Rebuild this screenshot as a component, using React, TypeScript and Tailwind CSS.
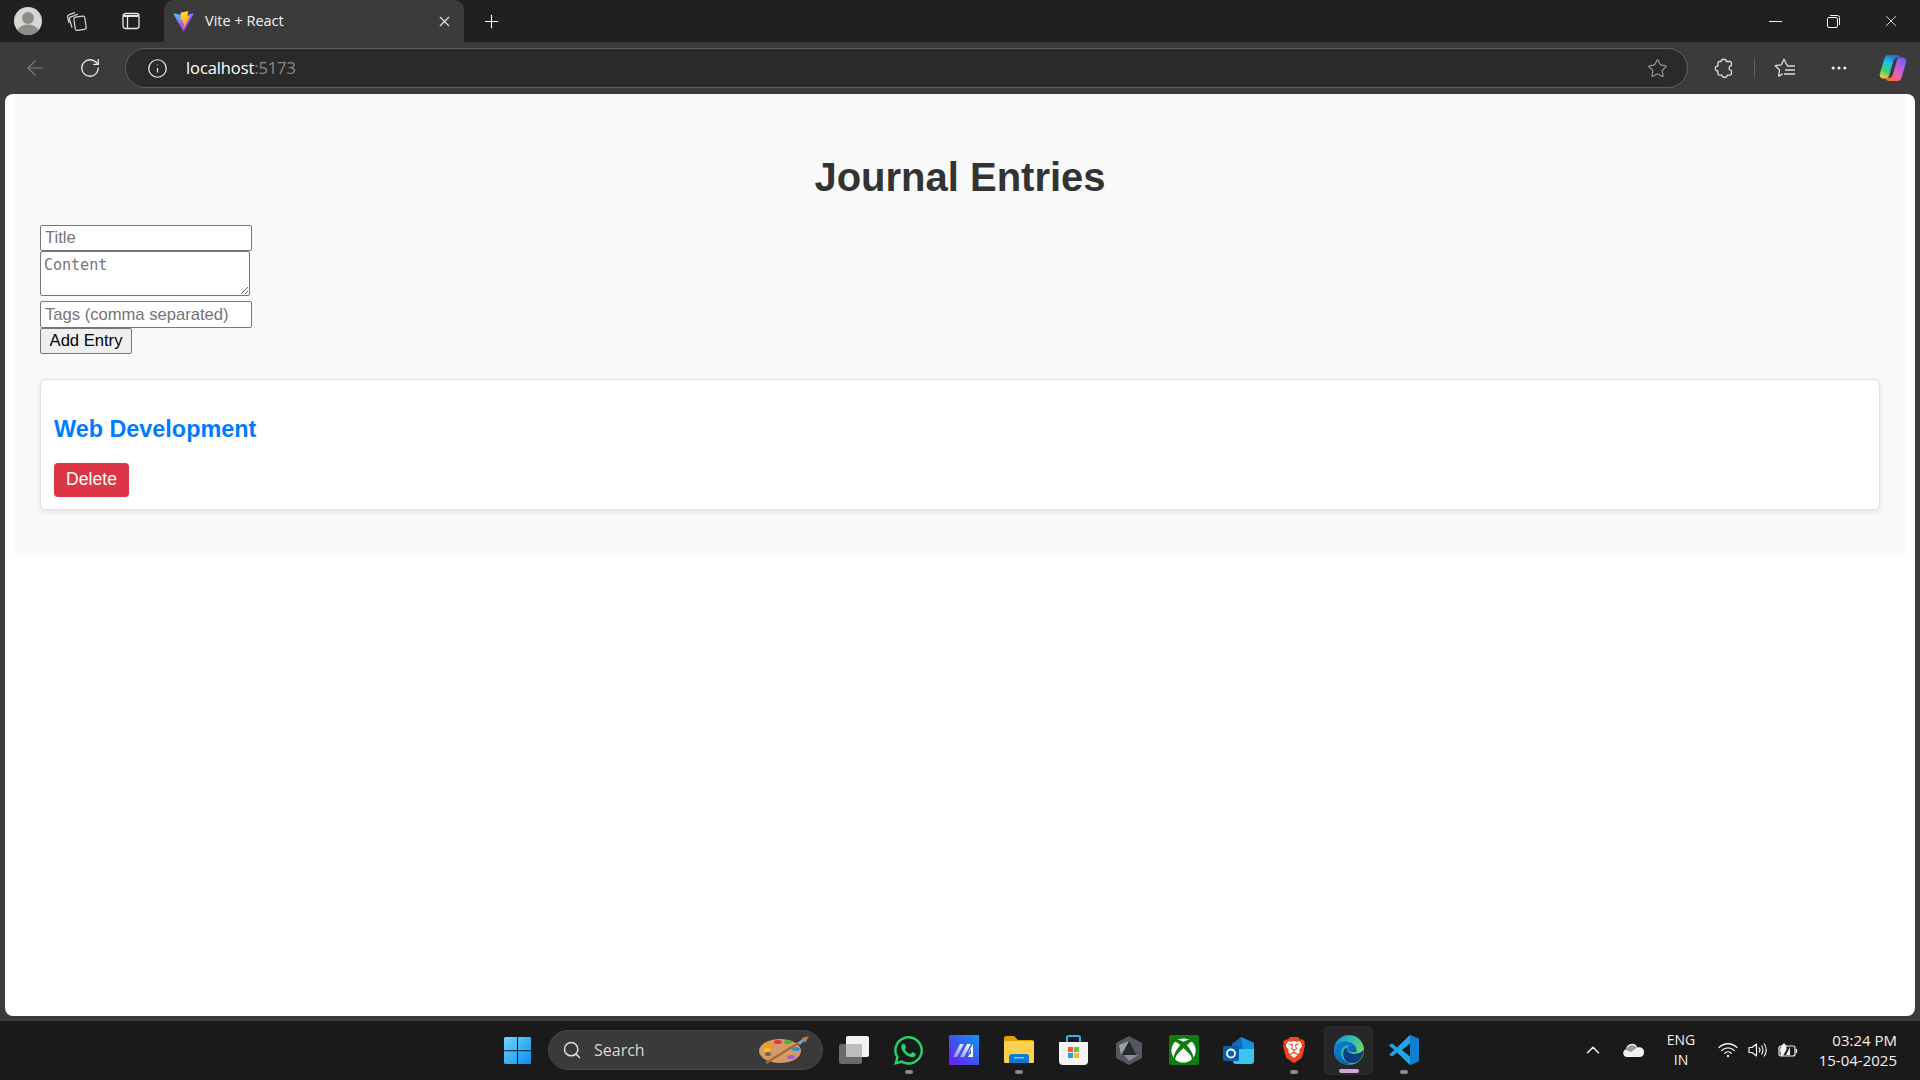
import { ArrowLeft, ChevronUp, Info, MoreHorizontal, Plus, RotateCw, Search, Star, X } from 'lucide-react';
import { FaWhatsapp, FaXbox } from 'react-icons/fa';
import { SiBrave } from 'react-icons/si';

const chromeFont = { fontFamily: '"Open Sans", "Noto Sans", sans-serif' };

function ViteLogo() {
    return (
        <svg width="21" height="21" viewBox="0 0 410 404" fill="none">
            <defs>
                <linearGradient id="viteA" x1="6" y1="33" x2="235" y2="344" gradientUnits="userSpaceOnUse">
                    <stop stopColor="#41D1FF" />
                    <stop offset="1" stopColor="#BD34FE" />
                </linearGradient>
                <linearGradient id="viteB" x1="194" y1="8" x2="236" y2="293" gradientUnits="userSpaceOnUse">
                    <stop stopColor="#FFEA83" />
                    <stop offset="0.08" stopColor="#FFDD35" />
                    <stop offset="1" stopColor="#FFA800" />
                </linearGradient>
            </defs>
            <path d="M399.641 59.5246L215.643 388.545C211.844 395.338 202.084 395.378 198.228 388.618L10.5817 59.5563C6.38087 52.1896 12.6802 43.2665 21.0281 44.7586L205.223 77.6824C206.398 77.8924 207.601 77.8904 208.776 77.6763L389.119 44.8058C397.439 43.2894 403.768 52.1434 399.641 59.5246Z" fill="url(#viteA)" />
            <path d="M292.965 1.5744L156.801 28.2552C154.563 28.6937 152.906 30.5903 152.771 32.8664L144.395 174.33C144.198 177.662 147.258 180.248 150.51 179.498L188.42 170.749C191.967 169.931 195.172 173.055 194.443 176.622L183.18 231.775C182.422 235.487 185.907 238.661 189.532 237.56L212.947 230.446C216.577 229.344 220.065 232.527 219.297 236.242L201.398 322.875C200.278 328.294 207.486 331.249 210.492 326.603L212.5 323.5L323.454 102.072C325.312 98.3645 322.108 94.137 318.036 94.9228L279.014 102.454C275.347 103.161 272.227 99.746 273.262 96.1583L298.731 7.86689C299.767 4.27314 296.636 0.855181 292.965 1.5744Z" fill="url(#viteB)" />
        </svg>
    );
}

function Avatar() {
    return (
        <svg width="28" height="28" viewBox="0 0 28 28">
            <defs>
                <clipPath id="avatarClip"><circle cx="14" cy="14" r="14" /></clipPath>
            </defs>
            <g clipPath="url(#avatarClip)">
                <rect width="28" height="28" fill="#d8d6d2" />
                <circle cx="14" cy="11" r="6" fill="#8f8d8a" />
                <ellipse cx="14" cy="25" rx="11" ry="7.5" fill="#8f8d8a" />
            </g>
        </svg>
    );
}

function WorkspacesIcon() {
    return (
        <svg width="22" height="22" viewBox="0 0 22 22" fill="none" stroke="#d8d8d8" strokeWidth="1.2">
            <rect x="8.5" y="6.5" width="11" height="13.5" rx="2" transform="rotate(-8 14 13)" />
            <path d="M6 17.5 3.5 9.5c-.4-1.2.3-2.2 1.4-2.6L12 4.2" />
            <path d="M3 13 1.6 7.2C1.4 6 2 5 3.2 4.6L9 2.6" />
        </svg>
    );
}

function TabsIcon() {
    return (
        <svg width="18" height="18" viewBox="0 0 18 18" fill="none" stroke="#e6e6e6" strokeWidth="1.3">
            <rect x="1" y="1.5" width="16" height="15" rx="2.5" />
            <path d="M5.5 5v11.5" />
            <path d="M1.5 3h15v2h-15z" fill="#e6e6e6" stroke="none" />
        </svg>
    );
}

function ExtensionIcon() {
    return (
        <svg width="20" height="21" viewBox="0 0 20 21" fill="none" stroke="#dcdcdc" strokeWidth="1.3" strokeLinejoin="round">
            <path d="M7 3.5c.4-3 5-3 5.3 0h3.4c1 0 1.7.7 1.7 1.7v2.6c-2.6-.4-3.6 4.6 0 4.8v2.9c0 1-.7 1.7-1.7 1.7h-2.5c.1 3-5.2 3-5.1 0H5.6c-1 0-1.7-.7-1.7-1.7v-2.6c-3.5.2-3.5-5.1 0-4.9V5.2c0-1 .7-1.7 1.7-1.7z" />
        </svg>
    );
}

function FavoritesIcon() {
    return (
        <svg width="22" height="20" viewBox="0 0 22 20" fill="none" stroke="#dcdcdc" strokeWidth="1.3" strokeLinejoin="round">
            <path d="M13.6 7.2 12.7 6.8 10 1.2 7.3 6.8 1.2 7.7l4.4 4.3-1 6.1 4.2-2.2" />
            <path d="M13 8h8M11 12h10M10 16h11" />
        </svg>
    );
}

function CopilotIcon() {
    return (
        <svg width="28" height="28" viewBox="0 0 28 28">
            <defs>
                <linearGradient id="copA" x1="0.6" y1="0" x2="0.2" y2="1">
                    <stop offset="0" stopColor="#1f6fe0" />
                    <stop offset="0.35" stopColor="#22c0e0" />
                    <stop offset="0.7" stopColor="#3fd070" />
                    <stop offset="1" stopColor="#f5c83a" />
                </linearGradient>
                <linearGradient id="copB" x1="0.7" y1="0" x2="0.3" y2="1">
                    <stop offset="0" stopColor="#7a5be8" />
                    <stop offset="0.35" stopColor="#b060e8" />
                    <stop offset="0.7" stopColor="#ee5fb0" />
                    <stop offset="1" stopColor="#ff6a32" />
                </linearGradient>
            </defs>
            <path d="M9 1h9c1.500 0 3 1 3.500 3h-3c-2 0-3.500 1-4.200 3L10 22c-.5 1.500-2 2.500-3.500 2.500h-2C1.500 24.500 0 22 1 19L5.500 4.500C6 2.500 7.500 1 9 1z" fill="url(#copA)" />
            <path d="M19 27h-9c-1.500 0-3-1-3.500-3h3c2 0 3.500-1 4.200-3L18 6c.5-1.500 2-2.500 3.500-2.500h2c3 0 4.500 2.500 3.500 5.500L22.500 23.500C22 25.500 20.500 27 19 27z" fill="url(#copB)" />
        </svg>
    );
}

function WindowsLogo() {
    return (
        <svg width="29" height="29" viewBox="0 0 29 29">
            <defs>
                <linearGradient id="winGrad" x1="0" y1="0" x2="1" y2="1">
                    <stop offset="0" stopColor="#6fd6fb" />
                    <stop offset="1" stopColor="#0a8df0" />
                </linearGradient>
            </defs>
            <path d="M1 2.500A1.500 1.500 0 0 1 2.500 1H14v13.200H1zM15 1h11.500A1.500 1.500 0 0 1 28 2.500v11.700H15zM1 15.200h13V28H2.500A1.500 1.500 0 0 1 1 26.500zM15 15.200h13v11.300a1.500 1.500 0 0 1-1.500 1.500H15z" fill="url(#winGrad)" />
        </svg>
    );
}

function PaletteEmoji() {
    return (
        <svg width="52" height="30" viewBox="0 0 52 30">
            <ellipse cx="22" cy="16" rx="21" ry="12" fill="#d69a67" />
            <ellipse cx="10" cy="19" rx="3" ry="2" fill="#3b3b3b" opacity="0.6" />
            <ellipse cx="10" cy="10" rx="4" ry="2" fill="#f59e0b" />
            <ellipse cx="20" cy="7" rx="4" ry="2" fill="#e0383e" />
            <ellipse cx="30" cy="7" rx="4" ry="2" fill="#4caf3f" />
            <ellipse cx="38" cy="14" rx="4" ry="2" fill="#2f8fd8" />
            <ellipse cx="33" cy="22" rx="4" ry="2" fill="#a35bd6" />
            <ellipse cx="9" cy="15" rx="3.500" ry="2" fill="#f2c230" />
            <path d="M8 28 42 7" stroke="#a56a36" strokeWidth="2.500" />
            <path d="M40 8l4-4 2 2-4 4z" fill="#6aa7d8" />
            <path d="M44 3l7-2-4 7z" fill="#c97b40" />
        </svg>
    );
}

function TaskViewIcon() {
    return (
        <svg width="30" height="28" viewBox="0 0 30 28">
            <rect x="0" y="8" width="23" height="20" rx="2" fill="#6a6a6a" />
            <rect x="7" y="0" width="23" height="21" rx="2" fill="#f2f2f2" />
            <rect x="7" y="8" width="16" height="13" fill="#bdbdbd" />
        </svg>
    );
}

function ArcIcon() {
    return (
        <svg width="30" height="30" viewBox="0 0 30 30">
            <defs>
                <linearGradient id="arcGrad" x1="1" y1="0" x2="0" y2="1">
                    <stop offset="0" stopColor="#0a9cf5" />
                    <stop offset="0.5" stopColor="#3a55f0" />
                    <stop offset="1" stopColor="#6a1ff0" />
                </linearGradient>
                <linearGradient id="arcStreak" x1="0" y1="1" x2="1" y2="0">
                    <stop offset="0" stopColor="#ffffff" stopOpacity="0.35" />
                    <stop offset="1" stopColor="#ffffff" />
                </linearGradient>
            </defs>
            <rect width="30" height="30" fill="url(#arcGrad)" />
            <path d="M4 22 11 9h4L8 22zM11 22l7-13h4l-7 13z" fill="url(#arcStreak)" />
            <path d="M24 9v13h-5l1.500-3H22V14l-3 5 1-3z" fill="#ffffff" />
        </svg>
    );
}

function FolderIcon() {
    return (
        <svg width="30" height="28" viewBox="0 0 30 28">
            <path d="M0 2a2 2 0 0 1 2-2h8l4 4h14a2 2 0 0 1 2 2v4H0z" fill="#dfa100" />
            <rect x="0" y="5" width="30" height="22" rx="1.500" fill="#fbd24e" />
            <path d="M5 27v-6a3 3 0 0 1 3-3h14a3 3 0 0 1 3 3v6z" fill="#0f78d4" />
            <rect x="10" y="21" width="10" height="1.500" fill="#7cc3f5" />
        </svg>
    );
}

function StoreIcon() {
    return (
        <svg width="29" height="30" viewBox="0 0 29 30">
            <path d="M8 7V2.500A1.500 1.500 0 0 1 9.500 1h10A1.500 1.500 0 0 1 21 2.500V7" fill="none" stroke="#2fb4e8" strokeWidth="2" />
            <path d="M0 7h29v19a4 4 0 0 1-4 4H4a4 4 0 0 1-4-4z" fill="#f5f5f5" />
            <rect x="9" y="12" width="5" height="5" fill="#ea5a2a" />
            <rect x="15" y="12" width="5" height="5" fill="#7cb93a" />
            <rect x="9" y="18" width="5" height="5" fill="#1ea0e8" />
            <rect x="15" y="18" width="5" height="5" fill="#f8b818" />
        </svg>
    );
}

function HexIcon() {
    return (
        <svg width="26" height="29" viewBox="0 0 26 29">
            <path d="M13 0 26 7v15l-13 7L0 22V7z" fill="#54585e" />
            <path d="M13 5 21 20 6 19z" fill="#262a2f" />
            <path d="M13 5 5 19 3 9z" fill="#9ba0a6" />
            <path d="M8 19h14l-9 6z" fill="#8a8f95" />
        </svg>
    );
}

function OutlookIcon() {
    return (
        <svg width="31" height="27" viewBox="0 0 31 27">
            <path d="M18 0 31 6v10H9V7z" fill="#0f6cbd" />
            <path d="M9 12h22v12a3 3 0 0 1-3 3H13a3 3 0 0 1-3-3z" fill="#39c5f0" />
            <path d="M18 0 31 6v6H20z" fill="#1490df" />
            <rect x="0" y="9" width="16" height="15" rx="1.500" fill="#0b5cab" />
            <circle cx="8" cy="16.500" r="4" fill="none" stroke="#fff" strokeWidth="1.800" />
        </svg>
    );
}

function BraveIcon() {
    return (
        <div className="relative w-[26px] h-[30px] flex items-center justify-center">
            <div className="absolute left-[5px] top-[6px] w-[16px] h-[17px] rounded-[3px] bg-white" />
            <SiBrave className="relative w-[30px] h-[30px] text-[#f1451f]" />
        </div>
    );
}

function EdgeIcon() {
    return (
        <svg width="30" height="30" viewBox="0 0 30 30">
            <defs>
                <linearGradient id="edgeA" x1="0" y1="0" x2="1" y2="0.6">
                    <stop offset="0" stopColor="#0c8fd6" />
                    <stop offset="0.55" stopColor="#35c1a8" />
                    <stop offset="1" stopColor="#7fd65a" />
                </linearGradient>
                <linearGradient id="edgeB" x1="0" y1="0" x2="1" y2="1">
                    <stop offset="0" stopColor="#1283d8" />
                    <stop offset="1" stopColor="#0c4f9e" />
                </linearGradient>
            </defs>
            <circle cx="15" cy="15" r="15" fill="url(#edgeA)" />
            <path d="M0 16C1 7 9 5 15 7c6 2 8 6 7.500 10-5 1-9-.5-9-3.500 0-1.500 1-2.500 2-3-4-1-8.500 2-8.500 7.500 0 5.500 5 10 11 11.500C8 31 0 25 0 16z" fill="url(#edgeB)" />
            <path d="M13 13.500c0 5 7 7 13 4 3-1.500 4-3 4-2.500 0 3-2 8-5.500 11-4 3-9 3-12 .5-3.500-3-5-10-.5-14 .5.300.500.500 1 1z" fill="#0a3f86" />
        </svg>
    );
}

function VsCodeIcon() {
    return (
        <svg width="30" height="30" viewBox="0 0 30 30">
            <path d="M21 0 30 4v22l-9 4L8 17.500l-5 4L0 19.500 5.500 15 0 10.500 3 8.500l5 4z" fill="#23a3e8" />
            <path d="M21 0 30 4v22l-9 4z" fill="#0e7fcf" />
            <path d="M21 8.500 13 15l8 6.500z" fill="#1a1a1a" />
        </svg>
    );
}

function CloudIcon() {
    return (
        <svg width="21" height="14" viewBox="0 0 21 14">
            <path d="M4 14a4 4 0 0 1-1-7.800A6 6 0 0 1 14.500 4.500 4.800 4.800 0 0 1 21 9.500 4.500 4.500 0 0 1 17 14z" fill="#f2f2f2" />
            <path d="M3 7c1-4 7-7 11-2.500L8 9z" fill="#9a9a9a" />
        </svg>
    );
}

function WifiIcon() {
    return (
        <svg width="20" height="16" viewBox="0 0 20 16" fill="none" stroke="#f2f2f2" strokeWidth="1.300" strokeLinecap="round">
            <path d="M1 5.500c5-5 13-5 18 0" />
            <path d="M3.800 8.500c3.500-3.400 9-3.400 12.400 0" />
            <path d="M6.800 11.200c1.800-1.700 4.600-1.700 6.400 0" />
            <circle cx="10" cy="14" r="1.200" fill="#f2f2f2" stroke="none" />
        </svg>
    );
}

function VolumeIcon() {
    return (
        <svg width="20" height="16" viewBox="0 0 20 16" fill="none" stroke="#f2f2f2" strokeWidth="1.200" strokeLinejoin="round">
            <path d="M1 5.500h3L8.500 2v12L4 10.500H1z" />
            <path d="M11 5.500c1.200 1.500 1.200 3.500 0 5" />
            <path d="M13.500 3.500c2 2.500 2 6.500 0 9" />
            <path d="M16 1.500c3 3.800 3 9.200 0 13" />
        </svg>
    );
}

function BatteryIcon() {
    return (
        <svg width="20" height="16" viewBox="0 0 20 16" fill="none" stroke="#f2f2f2" strokeWidth="1.200">
            <rect x="1" y="4" width="16" height="10" rx="2" />
            <path d="M18.500 7v4" />
            <path d="M2 8c0-3 2-5 4-7 2 2 3 4 2.500 6.500L5 14H3z" fill="#f2f2f2" stroke="none" />
            <path d="M8 13l4-8v8z" fill="#f2f2f2" stroke="none" />
        </svg>
    );
}

const taskbarApps = [
    { key: 'task-view', icon: <TaskViewIcon />, open: false },
    { key: 'whatsapp', icon: <FaWhatsapp className="w-[33px] h-[33px] text-[#25d366]" />, open: true },
    { key: 'arc', icon: <ArcIcon />, open: false },
    { key: 'files', icon: <FolderIcon />, open: true },
    { key: 'store', icon: <StoreIcon />, open: false },
    { key: 'hex', icon: <HexIcon />, open: false },
    {
        key: 'xbox',
        icon: (
            <div className="w-[30px] h-[30px] rounded-[2px] bg-[#107c10] flex items-center justify-center">
                <FaXbox className="w-[25px] h-[25px] text-white" />
            </div>
        ),
        open: false,
    },
    { key: 'outlook', icon: <OutlookIcon />, open: false },
    { key: 'brave', icon: <BraveIcon />, open: true },
];

export default function App() {
    return (
        <div className="w-[1920px] h-[1080px] overflow-hidden flex flex-col bg-[#3b3b3b]" style={chromeFont}>
            {/* tab strip */}
            <div className="h-[42px] shrink-0 flex items-center bg-[#202020]">
                <div className="w-[56px] flex justify-center"><Avatar /></div>
                <div className="w-[42px] flex justify-center"><WorkspacesIcon /></div>
                <div className="w-[66px] flex justify-center"><TabsIcon /></div>
                <div className="w-[300px] h-[42px] flex items-center rounded-t-[10px] bg-[#3b3b3b] pl-[9px] pr-[11px] text-white">
                    <ViteLogo />
                    <span className="ml-[11px] flex-1 text-[14.5px] text-[#f2f2f2]">Vite + React</span>
                    <X className="w-[17px] h-[17px] text-[#e8e8e8]" strokeWidth={1.6} />
                </div>
                <div className="w-[54px] flex justify-center"><Plus className="w-[21px] h-[21px] text-white" strokeWidth={1.3} /></div>
                <div className="ml-auto flex items-center text-white">
                    <div className="w-[58px] flex justify-center"><div className="w-[13px] h-[1px] bg-[#f0f0f0]" /></div>
                    <div className="w-[58px] flex justify-center">
                        <svg width="13" height="13" viewBox="0 0 13 13" fill="none" stroke="#f0f0f0">
                            <rect x="0.5" y="2.500" width="10" height="10" rx="1.500" />
                            <path d="M3 .5h7.500a2 2 0 0 1 2 2V10" />
                        </svg>
                    </div>
                    <div className="w-[58px] flex justify-center"><X className="w-[18px] h-[18px] text-[#f0f0f0]" strokeWidth={1.2} /></div>
                </div>
            </div>

            {/* toolbar */}
            <div className="h-[52px] shrink-0 flex items-center bg-[#3b3b3b]">
                <div className="w-[62px] flex justify-center pl-[8px]"><ArrowLeft className="w-[24px] h-[24px] text-[#7e7e7e]" strokeWidth={1.2} /></div>
                <div className="w-[55px] flex justify-center"><RotateCw className="w-[22px] h-[22px] text-[#f0f0f0]" strokeWidth={1.4} /></div>
                <div className="ml-[8px] w-[1563px] h-[40px] shrink-0 flex items-center rounded-full border border-[#606060] bg-[#2a2a2a] pl-[21px] pr-[19px]">
                    <Info className="w-[21px] h-[21px] text-[#f0f0f0]" strokeWidth={1.4} />
                    <span className="ml-[18px] flex-1 text-[16.5px] tracking-[-0.1px] text-white">
                        localhost<span className="text-[#8b8b8b]">:5173</span>
                    </span>
                    <Star className="w-[21px] h-[21px] text-[#9a9a9a]" strokeWidth={1.3} />
                </div>
                <div className="ml-[12px] w-[48px] flex justify-center"><ExtensionIcon /></div>
                <div className="w-[1px] h-[20px] bg-[#5e5e5e] ml-[6px]" />
                <div className="w-[60px] flex justify-center"><FavoritesIcon /></div>
                <div className="w-[48px] flex justify-center"><MoreHorizontal className="w-[20px] h-[20px] text-[#e8e8e8]" strokeWidth={1.8} /></div>
                <div className="w-[57px] pl-[3px] flex justify-center"><CopilotIcon /></div>
            </div>

            {/* page */}
            <main className="w-[1910px] h-[922px] shrink-0 mx-[5px] rounded-[8px] bg-white overflow-hidden" style={{ fontFamily: '"Liberation Sans", Arial, sans-serif' }}>
                <div className="mx-[10px] h-[461px] bg-[#f9f9f9] px-[25px] pt-[56px]">
                    <h1 className="text-center text-[40px] leading-[54px] font-bold text-[#333]">Journal Entries</h1>

                    <form className="mt-[21px] flex flex-col items-start" onSubmit={(e) => e.preventDefault()}>
                        <input placeholder="Title" className="w-[212px] h-[26px] px-[4px] rounded-[2px] border border-[#767676] bg-white text-[16.6px] placeholder:text-[#757575]" />
                        <textarea placeholder="Content" className="block w-[210px] h-[45px] mt-0 px-[3px] py-[3px] rounded-[2px] border border-[#767676] bg-white text-[15px] leading-[20px] placeholder:text-[#757575]" style={{ fontFamily: '"DejaVu Sans Mono", monospace' }} />
                        <input placeholder="Tags (comma separated)" className="w-[212px] h-[27px] mt-[5px] px-[4px] rounded-[2px] border border-[#767676] bg-white text-[16.6px] placeholder:text-[#757575]" />
                        <button className="w-[92px] h-[26px] rounded-[2px] border border-[#767676] bg-[#efefef] text-[16.6px] text-black">Add Entry</button>
                    </form>

                    <div className="mt-[25px] h-[131px] rounded-[6px] border border-[#e0e0e0] bg-white px-[13px] shadow-[0_2px_5px_rgba(0,0,0,0.1)]">
                        <h3 className="mt-[35px] text-[23.4px] leading-[28px] font-bold text-[#007bff]">Web Development</h3>
                        <button className="mt-[20px] block w-[75px] h-[34px] pb-[1px] rounded-[4px] bg-[#dc3545] text-[17.6px] text-white">Delete</button>
                    </div>
                </div>
            </main>

            <div className="h-[5px] shrink-0" />

            {/* taskbar */}
            <footer className="h-[59px] shrink-0 flex items-center pb-[1px] bg-[#1a1a1a] text-[#f2f2f2]">
                <div className="ml-[502px] w-[30px] flex justify-center"><WindowsLogo /></div>
                <div className="ml-[16px] w-[275px] h-[40px] flex items-center rounded-full bg-[#3a3a3a] border border-[#454545] pl-[13px] pr-[12px]">
                    <Search className="w-[20px] h-[20px] text-[#e0e0e0]" strokeWidth={1.8} />
                    <span className="ml-[12px] flex-1 text-[16px] text-[#d6d6d6]">Search</span>
                    <PaletteEmoji />
                </div>
                <div className="ml-[3px] flex items-center">
                    {taskbarApps.map((app) => (
                        <div key={app.key} className="relative w-[55px] h-[49px] flex items-center justify-center">
                            {app.icon}
                            {app.open && <span className="absolute bottom-[1px] left-1/2 -translate-x-1/2 w-[8px] h-[4px] rounded-full bg-[#8a8a8a]" />}
                        </div>
                    ))}
                    <div className="relative w-[49px] h-[49px] ml-[3px] flex items-center justify-center rounded-[5px] bg-[#272727] border border-[#2e2e2e]">
                        <EdgeIcon />
                        <span className="absolute bottom-[1px] left-1/2 -translate-x-1/2 w-[20px] h-[4px] rounded-full bg-[#d8a4e8]" />
                    </div>
                    <div className="relative w-[61px] h-[49px] flex items-center justify-center">
                        <VsCodeIcon />
                        <span className="absolute bottom-[1px] left-1/2 -translate-x-1/2 w-[8px] h-[4px] rounded-full bg-[#8a8a8a]" />
                    </div>
                </div>

                <div className="ml-auto flex items-center pr-[23px]">
                    <ChevronUp className="w-[22px] h-[22px]" strokeWidth={1.6} />
                    <div className="ml-[19px] w-[21px]"><CloudIcon /></div>
                    <div className="ml-[20px] w-[34px] text-center text-[14px] leading-[20px]">ENG<br />IN</div>
                    <div className="ml-[20px] flex items-center gap-[10px]">
                        <WifiIcon />
                        <VolumeIcon />
                        <BatteryIcon />
                    </div>
                    <div className="ml-[19px] w-[80px] text-right text-[15px] leading-[20px] whitespace-nowrap">03:24 PM<br />15-04-2025</div>
                </div>
            </footer>
        </div>
    );
}
